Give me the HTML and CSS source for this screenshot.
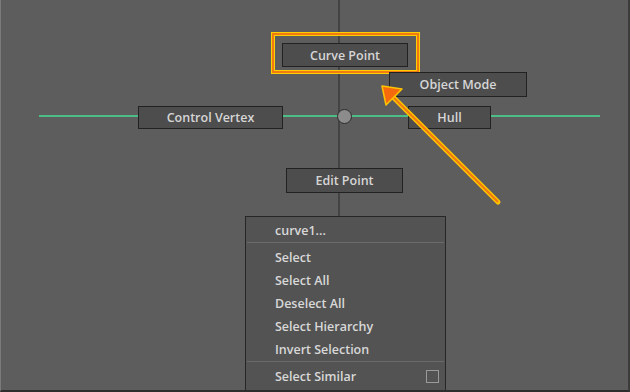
FILE: index.html
```html
<!DOCTYPE html>
<html lang="en">
<head>
<meta charset="UTF-8" />
<title>Marking Menu</title>
<link rel="stylesheet" href="styles.css">
</head>
<body>
  <div class="viewport">
    <div class="axis-v"></div>
    <div class="axis-h"></div>
    <div class="pivot"></div>

    <!-- marking menu items -->
    <div class="highlight"><div class="mm-item curve-point">Curve Point</div></div>
    <div class="mm-item object-mode">Object Mode</div>
    <div class="mm-item control-vertex">Control Vertex</div>
    <div class="mm-item hull">Hull</div>
    <div class="mm-item edit-point">Edit Point</div>

    <svg class="callout" width="630" height="392" viewBox="0 0 630 392">
      <line x1="497" y1="202" x2="392" y2="97" stroke="#ffc400" stroke-width="5" stroke-linecap="round"/>
      <line x1="497" y1="202" x2="392" y2="97" stroke="#f07a10" stroke-width="2"/>
      <polygon points="381,86 401,89 385,105" fill="#f56a0c" stroke="#ffc400" stroke-width="1.5" stroke-linejoin="round"/>
    </svg>

    <!-- context menu -->
    <div class="menu">
      <div class="menu-row">curve1...</div>
      <div class="menu-sep"></div>
      <div class="menu-row">Select</div>
      <div class="menu-row">Select All</div>
      <div class="menu-row">Deselect All</div>
      <div class="menu-row">Select Hierarchy</div>
      <div class="menu-row">Invert Selection</div>
      <div class="menu-sep"></div>
      <div class="menu-row has-box">Select Similar <span class="box"></span></div>
    </div>
  </div>
</body>
</html>
```

FILE: styles.css
```css
* { box-sizing: border-box; margin: 0; padding: 0; }
body {
  width: 630px; height: 392px; overflow: hidden;
  background: #5d5d5d;
  font-family: 'Open Sans', 'Noto Sans', sans-serif;
}

.viewport {
  position: relative; width: 630px; height: 392px;
  background: #5d5d5d;
  border-left: 1px solid #7a7a7a;
  border-right: 2px solid #3c3c3c;
  border-bottom: 2px solid #2e2e2e;
  overflow: hidden;
}

/* axes + pivot */
.axis-v { position: absolute; left: 337px; top: 0; width: 2px; height: 220px; background: #434343; }
.axis-h { position: absolute; left: 38px; top: 115px; width: 561px; height: 2px; background: #4dbd88; }
.pivot {
  position: absolute; left: 336px; top: 109px;
  width: 15px; height: 15px; border-radius: 50%;
  background: #8c8c8c; border: 1.5px solid #2c2c2c;
}

/* marking menu buttons */
.mm-item {
  position: absolute;
  display: flex; align-items: center; justify-content: center;
  background: #4d4d4d; border: 1.5px solid #222;
  color: #d6d6d6; font-size: 12.5px; font-weight: 600;
}
.highlight {
  position: absolute; left: 270px; top: 32px; width: 149px; height: 42px;
  border: 1px solid #ffd000;
  box-shadow: inset 0 0 0 2px #f27a12, inset 0 0 0 3px #ffd000;
}
.highlight .mm-item { left: 10px; top: 10px; width: 126px; height: 24px; }
.object-mode { left: 388px; top: 72px; width: 138px; height: 25px; }
.control-vertex { left: 137px; top: 106px; width: 145px; height: 23px; }
.hull { left: 407px; top: 106px; width: 83px; height: 23px; }
.edit-point { left: 285px; top: 168px; width: 117px; height: 25px; }

.callout { position: absolute; left: 0; top: 0; pointer-events: none; }

/* context menu */
.menu {
  position: absolute; left: 244px; top: 216px; width: 201px; height: 190px;
  background: #535353; border: 1.5px solid #262626;
  padding-top: 2px;
  display: flex; flex-direction: column;
}
.menu-row {
  height: 23px; padding: 0 6px 0 29px;
  display: flex; align-items: center; justify-content: space-between;
  color: #d8d8d8; font-size: 12.5px; font-weight: 600;
}
.menu-sep { height: 1px; background: #6a6a6a; margin: 0 1px 3px; }
.box { width: 13px; height: 13px; border: 1.5px solid #9a9a9a; }
```
